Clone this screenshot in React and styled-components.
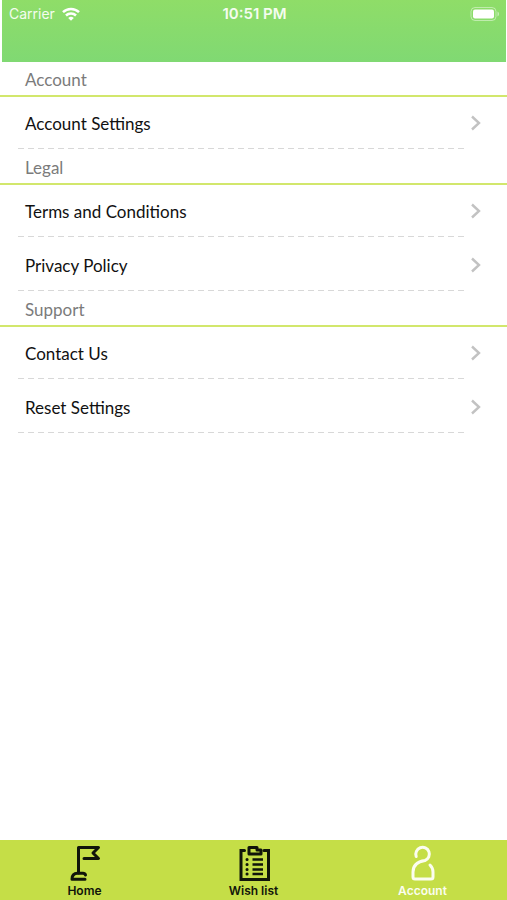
import React from 'react'
import { styled, createGlobalStyle } from 'styled-components'

const lime = '#c5de47'

const GlobalStyle = createGlobalStyle`
  * {
    box-sizing: border-box;
  }

  body {
    margin: 0;
    background: #ffffff;
    font-family: Lato, 'Liberation Sans', sans-serif;
  }
`
const Screen = styled.div`
  min-height: 100vh;
  display: flex;
  flex-direction: column;
`
const Header = styled.header`
  height: 62px;
  margin: 0 1px 0 2px;
  background: linear-gradient(#8fdd68, #80d973);
`
const StatusBar = styled.div`
  display: grid;
  grid-template-columns: 1fr auto 1fr;
  align-items: center;
  height: 27px;
  padding: 0 6px 0 7px;
  color: #f4fcef;
  font-family: Inter, sans-serif;
  font-size: 14px;
`
const Carrier = styled.div`
  display: flex;
  align-items: center;
  gap: 7px;
`
const Time = styled.time`
  font-size: 15px;
  font-weight: 600;
`
const Battery = styled.svg`
  justify-self: end;
`
const Content = styled.main`
  flex: 1;
`
const SectionTitle = styled.h2`
  height: 35px;
  margin: 0;
  padding: 2px 25px 0;
  border-bottom: 2px solid #d2e76c;
  color: #7b7b7b;
  font-size: 17px;
  font-weight: 400;
  line-height: 32px;
`
const List = styled.ul`
  margin: 0;
  padding: 0;
  list-style: none;
`
const Row = styled.li`
  height: 54px;

  &:first-child {
    height: 53px;
  }

  &:first-child > a {
    height: 51px;
    padding-top: 0;
  }
`
const RowLink = styled.a`
  display: flex;
  align-items: center;
  justify-content: space-between;
  height: 52px;
  padding: 2px 26px 0 25px;
  color: #111111;
  font-size: 17px;
  line-height: 24px;
  text-decoration: none;
`
const RowText = styled.span`
  padding-top: 2px;
`
const Dashes = styled.div`
  height: 1px;
  margin: 0 43px 0 18px;
  background: repeating-linear-gradient(90deg, #d8d8d8 0 6px, transparent 6px 10px);
`
const TabBar = styled.nav`
  display: grid;
  grid-template-columns: repeat(3, 1fr);
  height: 60px;
  background: ${lime};
`
const Tab = styled.a`
  display: flex;
  flex-direction: column;
  align-items: center;
  padding-top: 4px;
  color: ${props => props.$active ? '#fbfdf0' : '#11150a'};
  font-family: Inter, sans-serif;
  font-size: 12px;
  font-weight: 600;
  line-height: 16px;
  text-decoration: none;
`
const TabIcon = styled.svg`
  width: 40px;
  height: 39px;
  fill: none;
  stroke: currentColor;
  stroke-width: 3;
  stroke-linecap: round;
  stroke-linejoin: round;
`

const sections = [
  { title: 'Account', rows: ['Account Settings'] },
  { title: 'Legal', rows: ['Terms and Conditions', 'Privacy Policy'] },
  { title: 'Support', rows: ['Contact Us', 'Reset Settings'] },
]

const WifiIcon = () => (
  <svg width="18" height="14" viewBox="0 0 18 14" fill="none" stroke="#fff" strokeWidth="2.5" aria-hidden="true">
    <path d="M1 5.2a11.4 11.4 0 0 1 16 0" />
    <path d="M4 8.5a7.1 7.1 0 0 1 10 0" />
    <path d="M9 13.8 6.2 11a4 4 0 0 1 5.6 0z" fill="#fff" stroke="none" />
  </svg>
)

const BatteryIcon = () => (
  <Battery width="30" height="16" viewBox="0 0 30 16" aria-hidden="true">
    <rect x="1" y="1.5" width="25" height="13" rx="4" fill="none" stroke="#fff" strokeOpacity="0.45" />
    <rect x="3" y="3.5" width="21" height="9" rx="2" fill="#fff" />
    <path d="M27.5 5.5v5c2-.8 2-4.2 0-5z" fill="#fff" fillOpacity="0.5" />
  </Battery>
)

const Chevron = () => (
  <svg width="10" height="16" viewBox="0 0 10 16" fill="none" stroke="#c2c2c2" strokeWidth="2.4" aria-hidden="true">
    <path d="M1 1.5 8 8l-7 6.5" />
  </svg>
)

const FlagIcon = () => (
  <TabIcon viewBox="0 0 40 39" aria-hidden="true">
    <path d="M13.5 29V3.5h20L28 9l5.5 5.5H19" />
    <path d="M20.5 31q-.5-1.700-2.500-1.700h-5.500c-3.500 0-5.500 2-5.500 6h13" />
  </TabIcon>
)

const ListIcon = () => (
  <TabIcon viewBox="0 0 40 39" aria-hidden="true">
    <path d="M10.5 6.500H7v29h27.500v-29H30" strokeLinejoin="miter" />
    <path d="M15 10V3.500h8V6h4v4z" />
    <path d="M18.500 15.500H29M18.500 20.500H29M18.500 25.500H29M18.500 30H29" strokeWidth="2.6" strokeLinecap="butt" />
    <path d="M13 15.500h.1M13 20.500h.1M13 25.500h.1M13 30h.1" />
  </TabIcon>
)

const PersonIcon = () => (
  <TabIcon viewBox="0 0 40 39" aria-hidden="true">
    <path d="M13.200 12.500A6.800 6.800 0 1 1 22 16.500c-7 1-12 4.500-12 11.500v5q0 2 2 2h16q2 0 2-2v-5c0-3-1-5-3-7" />
  </TabIcon>
)

const App = () => {
  return (
    <>
      <GlobalStyle />
      <Screen>
        <Header>
          <StatusBar>
            <Carrier>Carrier <WifiIcon /></Carrier>
            <Time>10:51 PM</Time>
            <BatteryIcon />
          </StatusBar>
        </Header>
        <Content>
          {sections.map(section => (
            <section key={section.title}>
              <SectionTitle>{section.title}</SectionTitle>
              <List>
                {section.rows.map(row => (
                  <Row key={row}>
                    <RowLink href="#"><RowText>{row}</RowText><Chevron /></RowLink>
                    <Dashes />
                  </Row>
                ))}
              </List>
            </section>
          ))}
        </Content>
        <TabBar>
          <Tab href="#"><FlagIcon />Home</Tab>
          <Tab href="#"><ListIcon />Wish list</Tab>
          <Tab href="#" $active aria-current="page"><PersonIcon />Account</Tab>
        </TabBar>
      </Screen>
    </>
  )
}

export default App
